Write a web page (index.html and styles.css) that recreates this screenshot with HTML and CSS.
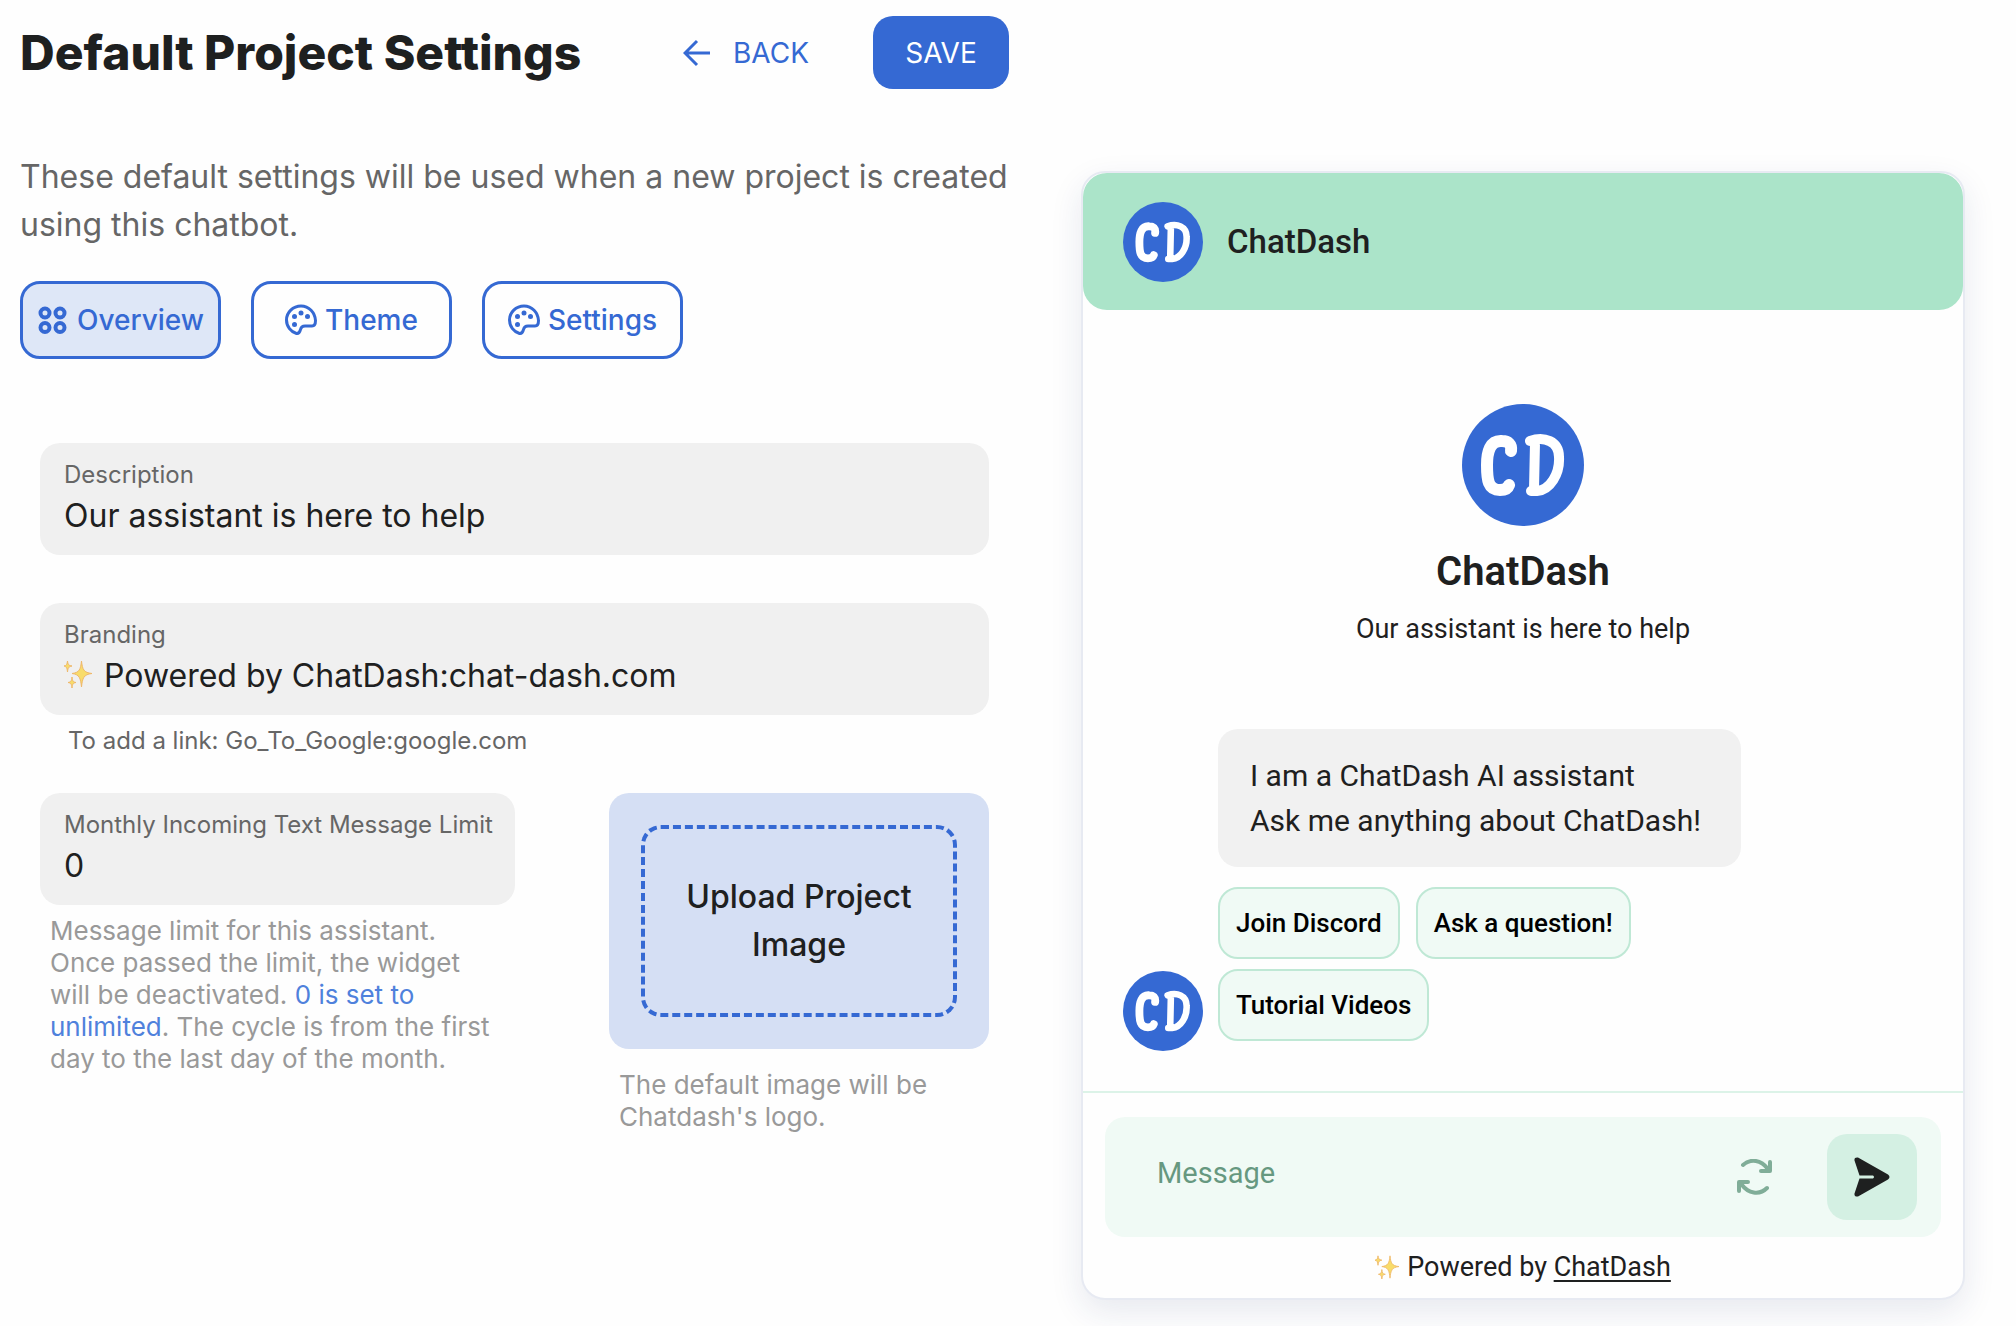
FILE: index.html
```html
<!DOCTYPE html>
<html lang="en">
<head>
<meta charset="utf-8">
<title>Default Project Settings</title>
<link rel="stylesheet" href="styles.css">
</head>
<body>
<svg class="defs" aria-hidden="true">
  <symbol id="logo" viewBox="0 0 122 122">
    <circle cx="61" cy="61" r="61" fill="currentColor"/>
    <g fill="none" stroke="#fff" stroke-linecap="round" stroke-linejoin="round">
      <path stroke-width="12" d="M49 47C50 40 46 37 40 37C28 36 25 48 25 61C25 76 26 86 38 86C43 86 46 84 47 81"/>
      <path stroke-width="10" d="M68 37C82 32 97 37 97 53C98 70 88 86 75 87L69 87M73 39L72 85"/>
    </g>
  </symbol>
  <symbol id="sparkles" viewBox="0 0 28 28">
    <g fill="#f8dc6a" stroke="#efb86b" stroke-width="1">
      <path d="M17.500 1C18.500 9.500 19.500 12.500 28 13.500C19.500 14.500 18.500 18 17.500 27C16.500 18 15.500 14.500 8 13.500C15.500 12.500 16.500 9.500 17.500 1Z"/>
      <path d="M3.500 1C4 4.500 4.500 5.500 8 6C4.500 6.500 4 8 3.500 12C3 8 2.500 6.500 0 6C2.500 5.500 3 4.500 3.500 1Z"/>
      <path d="M8 17C8.500 21 9 22 12 22.500C9 23 8.500 24 8 28C7.500 24 7 23 4 22.500C7 22 7.500 21 8 17Z"/>
    </g>
  </symbol>
  <symbol id="palette" viewBox="0 0 32 31">
    <path fill="none" stroke="currentColor" stroke-width="3" stroke-linejoin="round" d="M16 1.500C8 1.500 1.500 8 1.500 15.500C1.500 22 6 27.500 11.500 29C14.500 29.500 15 27 15.500 25C16 22.500 17.500 21.500 20 21.500H27C29.500 21.500 30.500 19 30.500 16C30 8 24 1.500 16 1.500Z"/>
    <g fill="currentColor"><circle cx="9.500" cy="12" r="2.500"/><circle cx="16" cy="8.500" r="2.500"/><circle cx="22.500" cy="12" r="2.500"/><circle cx="9.500" cy="20" r="2.500"/></g>
  </symbol>
</svg>
<div class="page">
  <main class="settings">
    <header class="top">
      <h1>Default Project Settings</h1>
      <button class="back" type="button">
        <svg width="28" height="28" viewBox="0 0 28 28" fill="none" stroke="currentColor" stroke-width="3"><path d="M27 14H3M14 2L2 14L14 26"/></svg>
        BACK
      </button>
      <button class="save" type="button">SAVE</button>
    </header>
    <p class="intro">These default settings will be used when a new project is created using this chatbot.</p>
    <nav class="tabs">
      <button class="tab active" type="button">
        <svg width="32" height="32" viewBox="0 0 32 32" fill="none" stroke="currentColor" stroke-width="4"><circle cx="8" cy="9" r="4.500"/><circle cx="23" cy="9" r="4.500"/><circle cx="8" cy="23.500" r="4.500"/><circle cx="23" cy="23.500" r="4.500"/></svg>
        Overview
      </button>
      <button class="tab" type="button"><svg width="32" height="32"><use href="#palette"/></svg>Theme</button>
      <button class="tab" type="button"><svg width="32" height="32"><use href="#palette"/></svg>Settings</button>
    </nav>
    <form class="fields">
      <div class="field">
        <label for="description">Description</label>
        <input id="description" type="text" value="Our assistant is here to help">
      </div>
      <div class="field branding">
        <label for="branding">Branding</label>
        <div class="value">
          <svg width="28" height="28"><use href="#sparkles"/></svg>
          <input id="branding" type="text" value="Powered by ChatDash:chat-dash.com">
        </div>
      </div>
      <p class="helper">To add a link: Go_To_Google:google.com</p>
      <div class="split">
        <div class="split-col">
          <div class="field">
            <label for="limit">Monthly Incoming Text Message Limit</label>
            <input id="limit" type="text" value="0">
          </div>
          <p class="note limit-note">Message limit for this assistant. Once passed the limit, the widget will be deactivated. <span class="accent">0 is set to unlimited</span>. The cycle is from the first day to the last day of the month.</p>
        </div>
        <div class="split-col">
          <div class="upload"><button class="dropzone" type="button">Upload Project Image</button></div>
          <p class="note image-note">The default image will be Chatdash's logo.</p>
        </div>
      </div>
    </form>
  </main>
  <aside class="chat">
    <header class="chat-head">
      <svg class="avatar"><use href="#logo"/></svg>
      <h2>ChatDash</h2>
    </header>
    <div class="chat-body">
      <div class="hero">
        <svg class="avatar-large"><use href="#logo"/></svg>
        <h3>ChatDash</h3>
        <p>Our assistant is here to help</p>
      </div>
      <div class="message">
        <svg class="avatar"><use href="#logo"/></svg>
        <div class="message-main">
          <p class="bubble">I am a ChatDash AI assistant<br>Ask me anything about ChatDash!</p>
          <div class="replies">
            <button type="button">Join Discord</button>
            <button type="button">Ask a question!</button>
            <button type="button">Tutorial Videos</button>
          </div>
        </div>
      </div>
    </div>
    <footer class="chat-foot">
      <div class="composer">
        <input type="text" placeholder="Message" aria-label="Message">
        <button class="refresh" type="button" aria-label="Restart chat">
          <svg width="36" height="36" viewBox="0 0 36 36" fill="none" stroke="currentColor" stroke-width="4" stroke-linecap="round" stroke-linejoin="round"><path d="M6 6C14-1 24 1 31 10M33 3V12H24M30 29C22 37 11 34 5 26M2 32V23H11"/></svg>
        </button>
        <button class="send" type="button" aria-label="Send">
          <svg width="36" height="40" viewBox="0 0 36 40" fill="currentColor"><path d="M4 .5L34 17.500Q37 20 34 22.500L4 39.500Q0 40 .5 36.500L5.500 21.500H19Q21 20 19 18.500H5.500L.5 3.500Q0 0 4 .5Z"/></svg>
        </button>
      </div>
      <p class="powered"><svg width="24" height="24"><use href="#sparkles"/></svg><span>Powered by <a href="#">ChatDash</a></span></p>
    </footer>
  </aside>
</div>
</body>
</html>
```
FILE: styles.css
```css
* { box-sizing: border-box; }
body {
  margin: 0;
  background: #fefefe;
  color: #1e2020;
  font-family: Inter, "Open Sans", sans-serif;
}
h1, h2, h3, p { margin: 0; }
button, input { font: inherit; color: inherit; border: 0; background: none; padding: 0; }
input { width: 100%; min-width: 0; outline: 0; }
button { cursor: pointer; }
svg { flex: none; display: block; }
.defs { position: absolute; width: 0; height: 0; }

.page {
  display: grid;
  grid-template-columns: 989fr 884fr;
  column-gap: 72px;
  align-items: start;
  padding: 16px 51px 28px 20px;
}

.top { display: flex; align-items: center; height: 73px; }
h1 { font-size: 48px; line-height: 56px; font-weight: 800; white-space: nowrap; }
.back {
  display: flex;
  align-items: center;
  gap: 22px;
  margin-left: auto;
  color: #3569d3;
  font-size: 28px;
}
.save {
  width: 136px;
  height: 73px;
  margin-left: 64px;
  border-radius: 20px;
  background: #3569d3;
  color: #fff;
  font-size: 28px;
}
.intro { margin-top: 64px; color: #666; font-size: 32px; line-height: 48px; }

.tabs { display: flex; gap: 30px; margin-top: 32px; }
.tab {
  display: flex;
  align-items: center;
  justify-content: center;
  gap: 8px;
  width: 201px;
  height: 78px;
  border: 3px solid #3569d3;
  border-radius: 20px;
  color: #3569d3;
  font-size: 28px;
  font-weight: 500;
}
.tab.active { background: #dee7f7; }

.fields { margin-top: 84px; padding: 0 20px; }
.field {
  height: 112px;
  padding: 16px 24px 20px;
  border-radius: 20px;
  background: #f0f0f0;
}
.field label { display: block; color: #666; font-size: 24px; line-height: 32px; white-space: nowrap; }
.field input { display: block; height: 42px; margin-top: 4px; font-size: 32px; line-height: 42px; }
.branding { margin-top: 48px; }
.value { display: flex; align-items: center; gap: 12px; }
.helper { margin: 10px 0 36px 28px; color: #666; font-size: 24px; line-height: 32px; }
.split { display: grid; grid-template-columns: 475fr 380fr; column-gap: 94px; }
.split-col { min-width: 0; }
.note { padding-left: 10px; color: #999; font-size: 26px; line-height: 32px; }
.limit-note { margin-top: 10px; padding-right: 24px; }
.image-note { margin-top: 20px; padding-right: 40px; }
.accent { color: #4f81dc; }
.upload { display: flex; height: 256px; padding: 32px; border-radius: 20px; background: #d5dff4; }
.dropzone {
  flex: 1;
  border: 4px dashed #3569d3;
  border-radius: 20px;
  padding: 0 32px;
  font-size: 32px;
  line-height: 48px;
  font-weight: 500;
}

.chat {
  margin-top: 155px;
  border: 2px solid #e7eaf2;
  border-radius: 24px;
  background: #fefefe;
  box-shadow: 0 12px 32px rgba(30, 50, 110, .1);
  font-family: Roboto, "Liberation Sans", sans-serif;
}
.chat-head {
  display: flex;
  align-items: center;
  gap: 24px;
  height: 137px;
  padding: 0 40px;
  border-radius: 24px;
  background: #abe4c9;
}
.avatar { width: 80px; height: 80px; color: #3569d3; }
.avatar-large { width: 122px; height: 122px; color: #3569d3; }
h2 { font-size: 33px; line-height: 40px; font-weight: 500; }
.chat-body { padding: 94px 40px 40px; }
.hero { display: flex; flex-direction: column; align-items: center; text-align: center; }
h3 { margin-top: 22px; font-size: 40px; line-height: 48px; font-weight: 600; }
.hero p { margin-top: 17px; font-size: 27px; line-height: 32px; }
.message { display: flex; align-items: flex-end; gap: 15px; margin-top: 84px; }
.message-main { padding-bottom: 10px; }
.bubble {
  width: fit-content;
  padding: 24px 40px 24px 32px;
  border-radius: 20px;
  background: #f1f1f1;
  font-size: 30px;
  line-height: 45px;
}
.replies { display: flex; flex-wrap: wrap; gap: 10px 16px; max-width: 480px; margin-top: 20px; }
.replies button {
  height: 72px;
  padding: 0 16px;
  border: 2px solid #bfe8d5;
  border-radius: 20px;
  background: #f0faf5;
  color: #000;
  font-size: 26px;
  font-weight: 500;
}
.chat-foot { padding: 24px 22px 11px; border-top: 2px solid #dcf3e8; }
.composer {
  display: flex;
  align-items: center;
  height: 120px;
  padding: 0 24px 0 52px;
  border-radius: 20px;
  background: #f0faf5;
}
.composer input { flex: 1; height: 48px; margin-bottom: 8px; font-size: 29px; }
.composer input::placeholder { color: #669880; opacity: 1; }
.refresh { color: #80ad98; }
.send {
  display: flex;
  align-items: center;
  justify-content: center;
  width: 90px;
  height: 86px;
  margin-left: 54px;
  border-radius: 20px;
  background: #d4f0e3;
}
.powered {
  display: flex;
  align-items: center;
  justify-content: center;
  gap: 8px;
  margin-top: 10px;
  font-size: 27px;
  line-height: 40px;
}
.powered a { color: inherit; text-underline-offset: 4px; }
```
